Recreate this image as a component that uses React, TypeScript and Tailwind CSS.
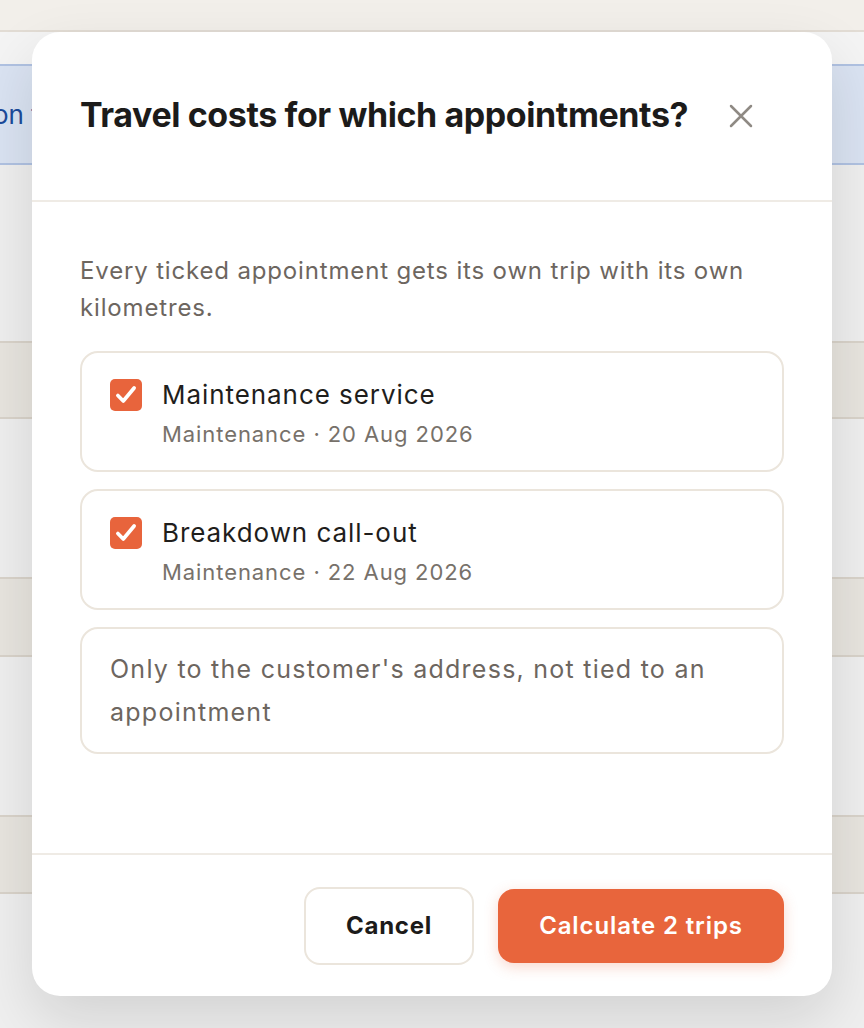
import React from "react";

function Check() {
  return (
    <span className="flex h-[32px] w-[32px] shrink-0 items-center justify-center rounded-[5px] bg-[#e8643c]">
      <svg width="26" height="26" viewBox="0 0 24 24" fill="none" stroke="white" strokeWidth="3.4" strokeLinecap="round" strokeLinejoin="round">
        <path d="M4.5 12.5l5 5L19.5 5.5" />
      </svg>
    </span>
  );
}

function Appt({ title, sub }: { title: string; sub: string }) {
  return (
    <div className="flex h-[121px] items-start gap-[20px] rounded-[18px] border-2 border-[#ebe5dc] pl-[28px] pt-[26px]">
      <Check />
      <div className="flex flex-col">
        <span className="text-[26px] leading-[32px] tracking-[0.036em] text-[#1f1e1c]">{title}</span>
        <span className="mt-[10px] text-[22px] leading-[26px] tracking-[0.042em] text-[#77716a]">{sub}</span>
      </div>
    </div>
  );
}

export default function App() {
  const font = { fontFamily: "Inter, 'Noto Sans', sans-serif" };
  return (
    <div className="relative h-[1028px] w-[864px] overflow-hidden bg-[#f3f3f3]" style={font}>
      {/* background page */}
      <div className="flex flex-col">
        <div className="h-[32px] border-b-2 border-[#e6e0d8] bg-[#f6f3ee]" />
        <div className="h-[32px] bg-[#f8f8f8]" />
        <div className="flex h-[101px] items-center border-y-2 border-[#b3c6e6] bg-[#dee7f6]">
          <span className="text-[26px] text-[#1d4d9e]" style={{ marginLeft: -7 }}>on the</span>
        </div>
        <div className="h-[176px]" />
        <div className="h-[78px] border-y-2 border-[#ddd7ce] bg-[#ece9e3]" />
        <div className="h-[158px]" />
        <div className="h-[80px] border-y-2 border-[#ddd7ce] bg-[#ece9e3]" />
        <div className="h-[158px]" />
        <div className="h-[79px] border-y-2 border-[#ddd7ce] bg-[#ece9e3]" />
      </div>

      {/* overlay */}
      <div className="absolute inset-0 bg-black/[0.015]" />

      {/* dialog */}
      <div className="absolute left-[32px] top-[32px] flex h-[964px] w-[800px] flex-col rounded-[28px] bg-white shadow-[0_24px_60px_rgba(0,0,0,0.12)]">
        <div className="flex h-[170px] items-center justify-between border-b-2 border-[#efebe5] pb-[4px] pl-[48px] pr-[76px]">
          <h2 className="text-[34px] font-bold tracking-[-0.012em] text-[#1c1b1a]" style={{ fontFamily: "Inter, sans-serif" }}>
            Travel costs for which appointments?
          </h2>
          <svg width="30" height="30" viewBox="0 0 24 24" fill="none" stroke="#8f8a84" strokeWidth="2" strokeLinecap="round" style={{ marginTop: 4 }}>
            <path d="M4 4l16 16M20 4L4 20" />
          </svg>
        </div>

        <div className="flex flex-1 flex-col px-[48px] pt-[50px]">
          <p className="text-[24px] leading-[37px] tracking-[0.035em] text-[#6d665f]">
            Every ticked appointment gets its own trip with its own kilometres.
          </p>
          <div className="mt-[25px] flex flex-col gap-[17px]">
            <Appt title="Maintenance service" sub="Maintenance · 20 Aug 2026" />
            <Appt title="Breakdown call-out" sub="Maintenance · 22 Aug 2026" />
            <div className="flex h-[127px] items-center rounded-[18px] border-2 border-[#ebe5dc] pl-[28px] pr-[40px]">
              <p className="text-[25px] leading-[43px] tracking-[0.05em] text-[#6d665f]">
                Only to the customer's address, not tied to an appointment
              </p>
            </div>
          </div>
        </div>

        <div className="flex h-[143px] items-start justify-end gap-[24px] border-t-2 border-[#efebe5] pr-[48px] pt-[32px]">
          <button className="flex h-[78px] w-[170px] items-center justify-center rounded-[16px] border-2 border-[#ebe5dc] text-[24px] font-bold tracking-[0.03em] text-[#1c1b1a]">
            Cancel
          </button>
          <button className="mt-[2px] flex h-[74px] w-[286px] items-center justify-center rounded-[16px] bg-[#e8653c] text-[24px] font-semibold tracking-[0.037em] text-white shadow-[0_4px_14px_rgba(232,101,60,0.25)]">
            Calculate 2 trips
          </button>
        </div>
      </div>
    </div>
  );
}
